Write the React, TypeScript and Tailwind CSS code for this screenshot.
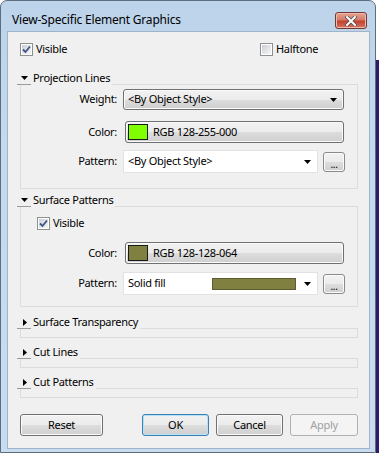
import React from "react";

const btnGrad =
  "bg-[linear-gradient(to_bottom,#f2f2f2_0%,#ebebeb_50%,#dddddd_51%,#cfcfcf_100%)]";

function Check({ checked }: { checked?: boolean }) {
  return (
    <div className="w-[13px] h-[13px] border border-[#8e8f8f] bg-white p-[1px] shrink-0">
      <div className="w-full h-full bg-[linear-gradient(135deg,#cbcfd5,#f6f6f6)] flex items-center justify-center">
        {checked && (
          <svg width="9" height="9" viewBox="0 0 9 9">
            <path d="M1 4.5 L3.5 7 L8 1.5" stroke="#3d5488" strokeWidth="1.8" fill="none" />
          </svg>
        )}
      </div>
    </div>
  );
}

function Down() {
  return (
    <svg width="7" height="4" viewBox="0 0 7 4">
      <path d="M0 0 H7 L3.5 4 Z" fill="#000" />
    </svg>
  );
}

function Right() {
  return (
    <svg width="4" height="7" viewBox="0 0 4 7">
      <path d="M0 0 V7 L4 3.5 Z" fill="#000" />
    </svg>
  );
}

function GroupHeader({ title, open }: { title: string; open?: boolean }) {
  return (
    <div className="flex items-end h-[13px]">
      <div className="-ml-[3px] w-[14px] h-[13px] border-b border-[#9a9a9a] flex items-center justify-center pl-[1px]">
        {open ? <Down /> : <Right />}
      </div>
      <span className="pl-[2px] pr-[2px] leading-[13px] self-start -mt-[1px]">{title}</span>
      <div className="flex-1 border-b border-[#dcdcdc]" />
    </div>
  );
}

function Label({ children }: { children: React.ReactNode }) {
  return <div className="w-[96px] text-right shrink-0">{children}</div>;
}

function Dots() {
  return (
    <div className={`w-[22px] h-[20px] rounded-[3px] border border-[#8a8a8a] ${btnGrad} shadow-[inset_0_0_0_1px_#fbfbfb] flex items-end justify-center pb-[3px] text-[10px] leading-[8px] ml-[5px]`}>
      ...
    </div>
  );
}

function ColorButton({ color, text }: { color: string; text: string }) {
  return (
    <div className={`ml-[8px] w-[219px] h-[22px] rounded-[3px] border border-[#707070] ${btnGrad} shadow-[inset_0_0_0_1px_#fbfbfb] flex items-center pl-[2px]`}>
      <div className="w-[20px] h-[16px] border border-[#1a1a1a]" style={{ background: color }} />
      <span className="ml-[5px]">{text}</span>
    </div>
  );
}

function Btn({ children, w, kind }: { children: React.ReactNode; w: string; kind?: "ok" | "disabled" }) {
  const base = "h-[22px] rounded-[3px] border flex items-center justify-center";
  if (kind === "disabled")
    return <div className={`${base} ${w} border-[#adb2b5] bg-[#f4f4f4] text-[#a0a0a0]`}>{children}</div>;
  if (kind === "ok")
    return (
      <div className={`${base} ${w} border-[#3c7fb1] ${btnGrad} shadow-[inset_0_0_0_1px_#b4e3f9]`}>{children}</div>
    );
  return (
    <div className={`${base} ${w} border-[#707070] ${btnGrad} shadow-[inset_0_0_0_1px_#fbfbfb]`}>{children}</div>
  );
}

export default function App() {
  return (
    <div className="w-[379px] h-[453px] flex bg-white font-['Noto_Sans',sans-serif] text-[11px] tracking-[-0.3px] text-black overflow-hidden">
      <div className="w-[376px] h-[453px] rounded-t-[7px] border border-[#5c6d7e] bg-[linear-gradient(to_bottom,#bcd3ea,#c4d9ee_30%,#c9dcef)] flex flex-col">
        {/* title bar */}
        <div className="h-[31px] flex items-start shrink-0">
          <div className="pl-[11px] pt-[11px] text-[12px] tracking-[-0.2px] leading-[16px] text-black">View-Specific Element Graphics</div>
          <div className="ml-auto mr-[8px] mt-[11px] w-[32px] h-[17px] rounded-[3px] border border-[#6d3a36] bg-[linear-gradient(to_bottom,#e8a493,#d47a68_45%,#c4412f_55%,#d27565)] flex items-center justify-center shadow-[inset_0_0_0_1px_#f0b8a8]">
            <svg width="12" height="10" viewBox="0 0 12 10">
              <path d="M2 1 L10 9 M10 1 L2 9" stroke="#4a4a4a" strokeWidth="3.4" strokeLinecap="square" />
              <path d="M2 1 L10 9 M10 1 L2 9" stroke="#ffffff" strokeWidth="2" strokeLinecap="square" />
            </svg>
          </div>
        </div>
        {/* content */}
        <div className="ml-[7px] mr-[6px] h-[416px] bg-[#f0f0f0] ring-1 ring-[#9fb4c9] flex flex-col pl-[12px] pr-[11px]">
          {/* row 1 */}
          <div className="mt-[11px] h-[13px] flex items-center">
            <div className="w-[240px] flex items-center">
              <Check checked />
              <span className="ml-[3px]">Visible</span>
            </div>
            <div className="flex items-center">
              <Check />
              <span className="ml-[3px]">Halftone</span>
            </div>
          </div>

          {/* Projection Lines */}
          <div className="mt-[16px]">
            <GroupHeader title="Projection Lines" open />
            <div className="border-l border-r border-b border-[#dcdcdc] pt-[4px] pb-[15px] flex flex-col">
              <div className="flex items-center h-[21px]">
                <Label>Weight:</Label>
                <div className={`ml-[6px] w-[221px] h-[21px] rounded-[3px] border border-[#707070] ${btnGrad} shadow-[inset_0_0_0_1px_#fbfbfb] flex items-center pl-[4px] pr-[6px]`}>
                  <span>&lt;By Object Style&gt;</span>
                  <div className="ml-auto"><Down /></div>
                </div>
              </div>
              <div className="flex items-center h-[22px] mt-[11px]">
                <Label>Color:</Label>
                <ColorButton color="#80ff00" text="RGB 128-255-000" />
              </div>
              <div className="flex items-center h-[23px] mt-[7px]">
                <Label>Pattern:</Label>
                <div className="ml-[6px] w-[195px] h-[23px] bg-white border border-[#e2e2e2] flex items-center pl-[4px] pr-[6px]">
                  <span>&lt;By Object Style&gt;</span>
                  <div className="ml-auto"><Down /></div>
                </div>
                <Dots />
              </div>
            </div>
          </div>

          {/* Surface Patterns */}
          <div className="mt-[5px]">
            <GroupHeader title="Surface Patterns" open />
            <div className="border-l border-r border-b border-[#dcdcdc] pt-[10px] pb-[11px] flex flex-col">
              <div className="flex items-center h-[13px] pl-[16px]">
                <Check checked />
                <span className="ml-[3px]">Visible</span>
              </div>
              <div className="flex items-center h-[22px] mt-[12px]">
                <Label>Color:</Label>
                <ColorButton color="#808040" text="RGB 128-128-064" />
              </div>
              <div className="flex items-center h-[23px] mt-[8px]">
                <Label>Pattern:</Label>
                <div className="ml-[6px] w-[195px] h-[23px] bg-white border border-[#e2e2e2] flex items-center pl-[4px] pr-[6px]">
                  <span>Solid fill</span>
                  <div className="ml-auto mr-[8px] w-[84px] h-[12px] bg-[#808040] border border-[#5c5c30]" />
                  <Down />
                </div>
                <Dots />
              </div>
            </div>
          </div>

          {/* Collapsed groups */}
          {["Surface Transparency", "Cut Lines", "Cut Patterns"].map((t, i) => (
            <div key={t} className={i === 0 ? "mt-[9px]" : "mt-[8px]"}>
              <GroupHeader title={t} />
              <div className="h-[9px] border-l border-r border-b border-[#dcdcdc]" />
            </div>
          ))}

          {/* Buttons */}
          <div className="mt-[16px] flex items-center">
            <Btn w="w-[83px]">Reset</Btn>
            <div className="ml-auto flex gap-[7px]">
              <Btn w="w-[67px]" kind="ok">OK</Btn>
              <Btn w="w-[67px]">Cancel</Btn>
              <Btn w="w-[68px]" kind="disabled">Apply</Btn>
            </div>
          </div>
        </div>
      </div>
      <div className="w-[3px] flex flex-col">
        <div className="h-[60px] bg-white" />
        <div className="flex-1 bg-[#2e1a6c]" />
      </div>
    </div>
  );
}
